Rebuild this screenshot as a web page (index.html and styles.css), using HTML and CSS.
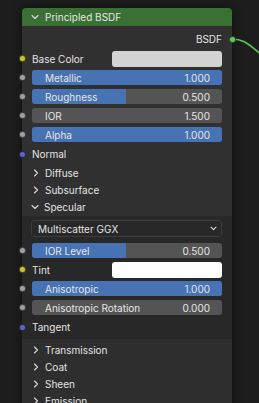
FILE: index.html
```html
<!DOCTYPE html>
<html>
<head>
<meta charset="utf-8">
<link rel="stylesheet" href="styles.css">
</head>
<body>
<div class="editor">
  <svg class="link" width="259" height="80" viewBox="0 0 259 80"><path d="M232 39 C 244 39, 248 44, 262 55"/></svg>
  <div class="node">
    <div class="header">
      <svg class="chev" width="8" height="6" viewBox="0 0 8 6"><path d="M1 1.5 L4 4.5 L7 1.5"/></svg>
      <span>Principled BSDF</span>
    </div>
    <div class="body">
      <div class="row out-row"><span class="out-label">BSDF</span><i class="sock sock-out green"></i></div>
      <div class="row"><i class="sock yellow"></i><span class="label">Base Color</span><div class="swatch grey"></div></div>
      <div class="row"><i class="sock gray"></i><div class="slider"><div class="fill" style="width:100%"></div><span class="s-label">Metallic</span><span class="s-val">1.000</span></div></div>
      <div class="row"><i class="sock gray"></i><div class="slider"><div class="fill" style="width:49.5%"></div><span class="s-label">Roughness</span><span class="s-val">0.500</span></div></div>
      <div class="row"><i class="sock gray"></i><div class="slider"><span class="s-label">IOR</span><span class="s-val">1.500</span></div></div>
      <div class="row"><i class="sock gray"></i><div class="slider"><div class="fill" style="width:100%"></div><span class="s-label">Alpha</span><span class="s-val">1.000</span></div></div>
      <div class="row vec-row"><i class="sock purple"></i><span class="label">Normal</span></div>
      <div class="panel-head"><svg class="chev-r" width="6" height="8" viewBox="0 0 6 8"><path d="M1.5 1 L4.5 4 L1.5 7"/></svg><span>Diffuse</span></div>
      <div class="panel-head"><svg class="chev-r" width="6" height="8" viewBox="0 0 6 8"><path d="M1.5 1 L4.5 4 L1.5 7"/></svg><span>Subsurface</span></div>
      <div class="panel-head open"><svg class="chev-d" width="8" height="6" viewBox="0 0 8 6"><path d="M1 1.5 L4 4.5 L7 1.5"/></svg><span>Specular</span></div>
      <div class="panel-body">
        <div class="dropdown"><span>Multiscatter GGX</span><svg class="dd-chev" width="7" height="5" viewBox="0 0 7 5"><path d="M1 1.2 L3.5 3.6 L6 1.2"/></svg></div>
        <div class="row"><i class="sock gray"></i><div class="slider"><div class="fill" style="width:49.5%"></div><span class="s-label">IOR Level</span><span class="s-val">0.500</span></div></div>
        <div class="row"><i class="sock yellow"></i><span class="label">Tint</span><div class="swatch white"></div></div>
        <div class="row"><i class="sock gray"></i><div class="slider"><div class="fill" style="width:100%"></div><span class="s-label">Anisotropic</span><span class="s-val">1.000</span></div></div>
        <div class="row"><i class="sock gray"></i><div class="slider"><span class="s-label">Anisotropic Rotation</span><span class="s-val">0.000</span></div></div>
        <div class="row vec-row"><i class="sock purple"></i><span class="label">Tangent</span></div>
      </div>
      <div class="panels-rest">
        <div class="panel-head"><svg class="chev-r" width="6" height="8" viewBox="0 0 6 8"><path d="M1.5 1 L4.5 4 L1.5 7"/></svg><span>Transmission</span></div>
        <div class="panel-head"><svg class="chev-r" width="6" height="8" viewBox="0 0 6 8"><path d="M1.5 1 L4.5 4 L1.5 7"/></svg><span>Coat</span></div>
        <div class="panel-head"><svg class="chev-r" width="6" height="8" viewBox="0 0 6 8"><path d="M1.5 1 L4.5 4 L1.5 7"/></svg><span>Sheen</span></div>
        <div class="panel-head"><svg class="chev-r" width="6" height="8" viewBox="0 0 6 8"><path d="M1.5 1 L4.5 4 L1.5 7"/></svg><span>Emission</span></div>
      </div>
    </div>
  </div>
</div>
</body>
</html>
```

FILE: styles.css
```css
html, body {
  margin: 0;
  padding: 0;
  background: #1d1d1d;
  overflow: hidden;
}
body {
  width: 259px;
  height: 403px;
  font-family: Inter, "DejaVu Sans", sans-serif;
  font-size: 10px;
  color: #e4e4e4;
}
.editor {
  position: relative;
  width: 259px;
  height: 403px;
  padding-top: 8px;
  box-sizing: border-box;
}
.link {
  position: absolute;
  left: 0;
  top: 0;
}
.link path {
  fill: none;
  stroke: #5dc35d;
  stroke-width: 1.6;
}
.node {
  margin-left: 22px;
  width: 210px;
  border-radius: 4px 4px 0 0;
  box-shadow: 0 0 8px 2px rgba(0, 0, 0, 0.35);
  position: relative;
}
.header {
  height: 18px;
  background: #3b7034;
  border-radius: 4px 4px 0 0;
  display: flex;
  align-items: center;
  padding-left: 9px;
  gap: 6px;
  color: #e6e6e6;
}
.chev path, .chev-d path, .chev-r path, .dd-chev path {
  fill: none;
  stroke: #dcdcdc;
  stroke-width: 1.1;
  stroke-linecap: round;
  stroke-linejoin: round;
}
.body {
  background: #303030;
  padding-top: 3px;
}
.row {
  position: relative;
  height: 19px;
  display: flex;
  align-items: center;
  padding: 0 10px;
}
.out-row {
  height: 20px;
  justify-content: flex-end;
}
.vec-row {
  height: 20px;
}
.out-label {
  color: #e6e6e6;
}
.sock {
  position: absolute;
  left: -3.5px;
  top: 50%;
  width: 7px;
  height: 7px;
  margin-top: -3.5px;
  border-radius: 50%;
  box-sizing: border-box;
  border: 0.5px solid rgba(0, 0, 0, 0.6);
}
.sock-out {
  left: auto;
  right: -3.5px;
}
.green { background: #63c763; }
.yellow { background: #c7c729; }
.gray { background: #a1a1a1; }
.purple { background: #6363c7; }
.label {
  width: 80px;
  flex: none;
  white-space: nowrap;
}
.swatch {
  flex: 1;
  height: 16px;
  border-radius: 3px;
}
.swatch.grey { background: #d3d3d3; }
.swatch.white { background: #ffffff; }
.slider {
  position: relative;
  flex: 1;
  height: 15px;
  border-radius: 3px;
  background: #545454;
  overflow: hidden;
  display: flex;
  align-items: center;
  justify-content: space-between;
  padding: 0 12px 0 13px;
}
.fill {
  position: absolute;
  left: 0;
  top: 0;
  bottom: 0;
  background: #4772b3;
}
.s-label, .s-val {
  position: relative;
  white-space: nowrap;
  color: #e6e6e6;
}
.panel-head {
  height: 17px;
  display: flex;
  align-items: center;
  padding-left: 11px;
  gap: 6px;
}
.panel-head.open {
  height: 18px;
  padding-left: 9px;
  gap: 5px;
}
.panel-body {
  background: #282828;
  padding: 4px 0 2px;
}
.dropdown {
  margin: 0 10px 4px 9px;
  height: 17px;
  box-sizing: border-box;
  border: 1px solid #3c3c3c;
  border-radius: 3px;
  background: #282828;
  display: flex;
  align-items: center;
  justify-content: space-between;
  padding: 0 4px 0 6px;
}
.panels-rest {
  background: #2e2e2e;
  padding-top: 2px;
  height: 80px;
}
```
